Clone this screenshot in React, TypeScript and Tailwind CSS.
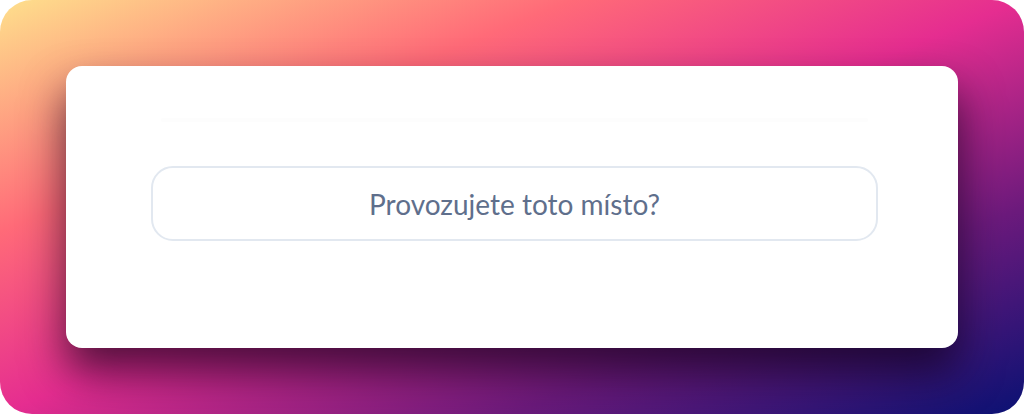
import React from "react";

export default function App() {
  return (
    <div className="w-[1024px] h-[414px] overflow-hidden bg-white">
      <div className="w-full h-full rounded-[32px] bg-[linear-gradient(to_bottom_right,#fee08c_0%,#ff6a78_28%,#e52d90_50%,#6c1a7c_75%,#0a1173_100%)] p-[66px]">
        <div className="w-full h-full bg-white rounded-[16px] shadow-[0_24px_44px_rgba(15,0,25,0.7)] pl-[85px] pr-[80px] pt-[52px]">
          {/* faint divider */}
          <div className="mx-[10px] h-[4px] rounded-full bg-[#fdfdfd]" />
          <button
            className="mt-[44px] w-full h-[75px] rounded-[22px] border-2 border-[#e2e8f0] bg-white flex items-center justify-center text-[28px] text-[#5f6f8c]"
            style={{ fontFamily: "Lato, 'Noto Sans', sans-serif" }}
          >
            Provozujete toto místo?
          </button>
        </div>
      </div>
    </div>
  );
}
